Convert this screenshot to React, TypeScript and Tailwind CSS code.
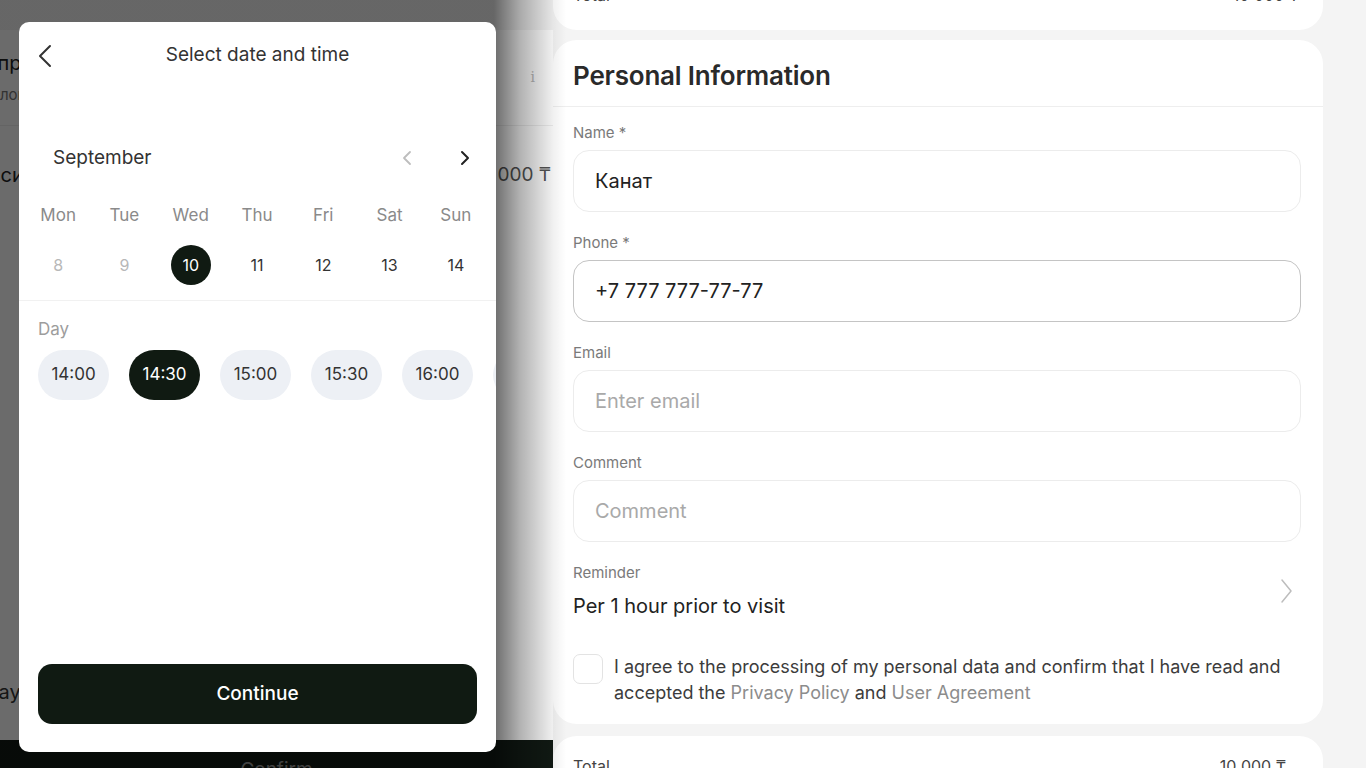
import { useState } from "react";

const days = [
    { wd: "Mon", d: 8, off: true },
    { wd: "Tue", d: 9, off: true },
    { wd: "Wed", d: 10 },
    { wd: "Thu", d: 11 },
    { wd: "Fri", d: 12 },
    { wd: "Sat", d: 13 },
    { wd: "Sun", d: 14 },
];

const times = ["14:00", "14:30", "15:00", "15:30", "16:00", "16:30"];

const Field = ({
    label,
    value,
    placeholder,
    focused,
}: {
    label: string;
    value?: string;
    placeholder?: string;
    focused?: boolean;
}) => (
    <div className="flex flex-col gap-[7px]">
        <span className="text-[15px] leading-[20px] text-[#7a7a7a]">{label}</span>
        <div
            className={`h-[62px] rounded-[16px] border bg-white px-[21px] flex items-center text-[20px] ${
                focused ? "border-[#c4c4c4]" : "border-[#ececec]"
            }`}
        >
            {value ? (
                <span className="text-[#222]">{value}</span>
            ) : (
                <span className="text-[#a9a9a9]">{placeholder}</span>
            )}
        </div>
    </div>
);

const DatePicker = () => {
    const [day, setDay] = useState(10);
    const [time, setTime] = useState("14:30");

    return (
        <div className="absolute left-[19px] top-[22px] w-[477px] h-[730px] bg-white rounded-[10px] flex flex-col overflow-hidden">
            {/* header */}
            <div className="relative h-[66px] shrink-0 flex items-center justify-center">
                <svg
                    className="absolute left-[19px] top-[22px]"
                    width="14"
                    height="24"
                    viewBox="0 0 14 24"
                    fill="none"
                    stroke="#333"
                    strokeWidth="2"
                    strokeLinecap="round"
                    strokeLinejoin="round"
                >
                    <path d="M12 2 L2 12 L12 22" />
                </svg>
                <span className="mt-[1px] text-[19px] text-[#333]">Select date and time</span>
            </div>

            <div className="h-[48px] shrink-0" />

            {/* month */}
            <div className="h-[44px] shrink-0 flex items-center justify-between pl-[34px] pr-[26px]">
                <span className="text-[19px] text-[#333]">September</span>
                <div className="flex items-center gap-[48px]">
                    <svg width="10" height="16" viewBox="0 0 10 16" fill="none" stroke="#bdbdbd" strokeWidth="1.8" strokeLinecap="round" strokeLinejoin="round">
                        <path d="M8 2 L2 8 L8 14" />
                    </svg>
                    <svg width="10" height="16" viewBox="0 0 10 16" fill="none" stroke="#222" strokeWidth="2" strokeLinecap="round" strokeLinejoin="round">
                        <path d="M2 2 L8 8 L2 14" />
                    </svg>
                </div>
            </div>

            {/* week */}
            <div className="grid grid-cols-7 pl-[6px] pr-[7px] mt-[23px]">
                {days.map((d) => (
                    <div key={d.wd} className="flex flex-col items-center">
                        <span className="h-[24px] leading-[24px] text-[17px] text-[#8a8a8a]">{d.wd}</span>
                        <button
                            onClick={() => !d.off && setDay(d.d)}
                            className={`mt-[18px] w-[40px] h-[40px] rounded-full flex items-center justify-center text-[16px] ${
                                day === d.d
                                    ? "bg-[#101a12] text-white"
                                    : d.off
                                    ? "text-[#b8b8b8]"
                                    : "text-[#333]"
                            }`}
                        >
                            {d.d}
                        </button>
                    </div>
                ))}
            </div>

            <div className="mt-[15px] h-px shrink-0 bg-[#f1f1f1]" />

            {/* times */}
            <div className="pl-[19px] mt-[16px] text-[17px] leading-[24px] text-[#9d9d9d]">Day</div>
            <div className="pl-[19px] mt-[9px] flex gap-[20px] overflow-hidden">
                {times.map((t) => (
                    <button
                        key={t}
                        onClick={() => setTime(t)}
                        className={`shrink-0 w-[71px] h-[50px] rounded-full text-[17px] ${
                            time === t ? "bg-[#101a12] text-white" : "bg-[#edf0f5] text-[#333]"
                        }`}
                    >
                        {t}
                    </button>
                ))}
            </div>

            <div className="flex-1" />

            <div className="px-[19px] pb-[28px]">
                <button className="w-full h-[60px] rounded-[14px] bg-[#101a12] text-white text-[19px] font-medium">
                    Continue
                </button>
            </div>
        </div>
    );
};

export default function App() {
    return (
        <div className="relative w-full h-[768px] overflow-hidden bg-[#f4f4f4] flex font-['Inter',sans-serif]">
            {/* left column (behind modal) */}
            <div className="w-[553px] shrink-0 h-full bg-white flex flex-col overflow-hidden">
                <div className="h-[30px] shrink-0 bg-[#f4f4f4]" />
                <div className="h-[96px] shrink-0 border-b border-[#eeeeee] flex items-center justify-between pr-[18px]">
                    <div className="-ml-[26px] flex flex-col gap-[6px]">
                        <span className="text-[20px] text-[#222]">Запрос</span>
                        <span className="-ml-[-17px] text-[15px] text-[#777]">олонка</span>
                    </div>
                    <span className="text-[14px] text-[#bbb] font-['DejaVu_Serif',serif]">i</span>
                </div>
                <div className="h-[98px] shrink-0 flex items-center justify-between">
                    <span className="-ml-[36px] text-[20px] text-[#222]">Консилиум</span>
                    <span className="text-[19px] text-[#555] pr-[2px]">10 000 ₸</span>
                </div>
                <div className="flex-1" />
                <div className="pb-[33px]">
                    <span className="block -ml-[37px] text-[20px] text-[#333]">Today, 10 September</span>
                </div>
                <div className="h-[28px] shrink-0 bg-[#111a14] flex justify-center overflow-hidden">
                    <span className="pt-[16px] text-[19px] text-[#9a9a9a]">Confirm</span>
                </div>
            </div>

            {/* right column */}
            <div className="w-[770px] shrink-0 flex flex-col">
                <div className="shrink-0 -mt-[40px] h-[70px] bg-white rounded-[24px] flex justify-between px-[20px] pr-[24px] pt-[23px] text-[16px] leading-[24px] text-[#444]">
                    <span>Total</span>
                    <span>10 000 ₸</span>
                </div>

                <div className="shrink-0 mt-[10px] bg-white rounded-[24px] flex flex-col">
                    <div className="h-[67px] pt-[5px] border-b border-[#eeeeee] flex items-center px-[20px]">
                        <h2 className="text-[26px] font-semibold text-[#2a2a2a] tracking-[-0.2px]">Personal Information</h2>
                    </div>
                    <div className="pt-[16px] pl-[20px] pr-[22px] flex flex-col gap-[21px]">
                        <Field label="Name *" value="Канат" />
                        <Field label="Phone *" value="+7 777 777-77-77" focused />
                        <Field label="Email" placeholder="Enter email" />
                        <Field label="Comment" placeholder="Comment" />
                    </div>
                    <div className="mt-[21px] pl-[20px] pr-[30px] flex items-center justify-between">
                        <div className="flex flex-col">
                            <span className="text-[15px] leading-[20px] text-[#7a7a7a]">Reminder</span>
                            <span className="mt-[10px] text-[20px] leading-[26px] text-[#222]">Per 1 hour prior to visit</span>
                        </div>
                        <svg className="-mt-[1px]" width="14" height="26" viewBox="0 0 14 26" fill="none" stroke="#bdbdbd" strokeWidth="1.5" strokeLinecap="round" strokeLinejoin="round">
                            <path d="M3 2 L12 13 L3 24" />
                        </svg>
                    </div>
                    <div className="mt-[35px] pl-[20px] pr-[22px] pb-[18px] flex items-start gap-[11px]">
                        <div className="w-[30px] h-[30px] shrink-0 rounded-[7px] border border-[#e3e3e3] bg-white" />
                        <p className="text-[18px] leading-[26px] text-[#3c3c3c]">
                            I agree to the processing of my personal data and confirm that I have read and accepted the{" "}
                            <span className="text-[#8c8c8c]">Privacy Policy</span> and{" "}
                            <span className="text-[#8c8c8c]">User Agreement</span>
                        </p>
                    </div>
                </div>

                <div className="shrink-0 mt-[12px] h-[70px] bg-white rounded-[24px] flex justify-between px-[20px] pr-[37px] pt-[18px] text-[16px] leading-[24px] text-[#444]">
                    <span>Total</span>
                    <span>10 000 ₸</span>
                </div>
            </div>

            {/* dim overlay */}
            <div className="absolute left-0 top-0 h-full w-[566px] bg-[linear-gradient(to_right,rgba(0,0,0,0.58)_0px,rgba(0,0,0,0.58)_494px,rgba(0,0,0,0.3)_520px,rgba(0,0,0,0.06)_553px,rgba(0,0,0,0)_566px)]" />

            <DatePicker />
        </div>
    );
}
